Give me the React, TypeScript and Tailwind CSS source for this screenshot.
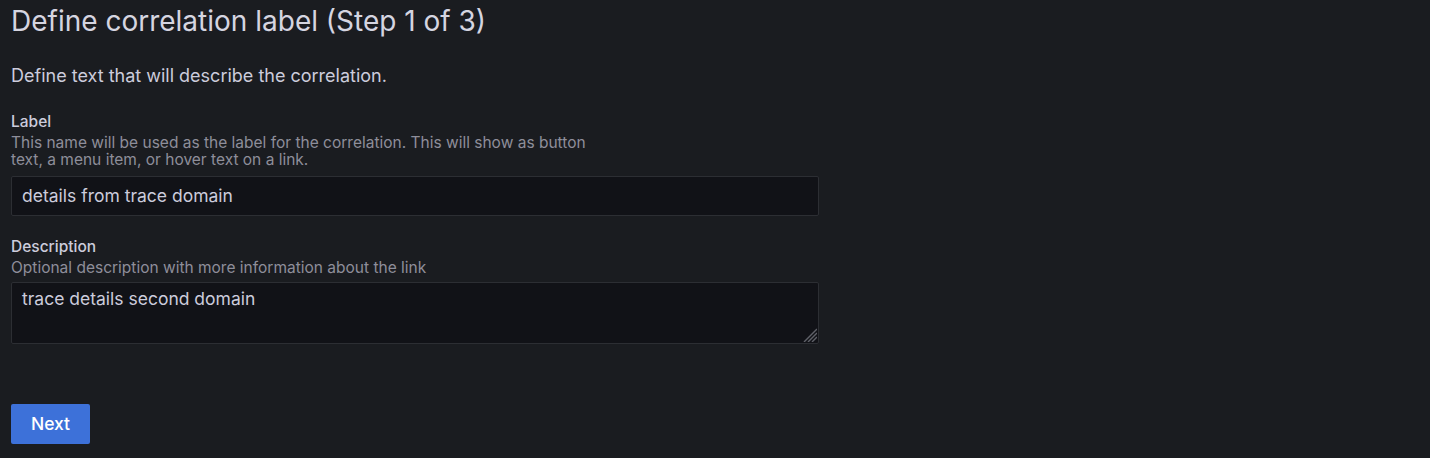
import React from "react";

export default function App() {
  return (
    <div
      className="w-[1430px] h-[458px] bg-[#1a1c20] text-[#ccccdc] px-[11px] pt-[5px] overflow-hidden"
      style={{ fontFamily: "Inter, 'Noto Sans', sans-serif" }}
    >
      <h2 className="text-[28px] leading-[32px] font-normal text-[#d5d5e0]">
        Define correlation label (Step 1 of 3)
      </h2>
      <p className="text-[18px] leading-[22px] mt-[28px]">Define text that will describe the correlation.</p>

      <div className="mt-[24px] w-[808px]">
        <div className="text-[15.5px] leading-[22px] font-medium text-[#ccccdc]">Label</div>
        <div className="mt-[1px] text-[15.5px] leading-[17px] text-[#8e8e9a] max-w-[600px]">
          This name will be used as the label for the correlation. This will show as button text, a menu item, or hover text on a link.
        </div>
        <div className="mt-[8px] h-[40px] bg-[#111217] border border-[#2c2e33] rounded-[2px] flex items-center px-[10px] text-[17.5px]">
          details from trace domain
        </div>
      </div>

      <div className="mt-[20px] w-[808px]">
        <div className="text-[15.5px] leading-[22px] font-medium">Description</div>
        <div className="mt-[1px] text-[15.5px] leading-[17px] text-[#8e8e9a]">Optional description with more information about the link</div>
        <div className="relative mt-[6px] h-[62px] bg-[#111217] border border-[#2c2e33] rounded-[2px] px-[10px] pt-[5px] text-[17.5px] leading-[22px]">
          trace details second domain
          <svg className="absolute right-[1px] bottom-[1px]" width="16" height="16" viewBox="0 0 16 16">
            <g stroke="#5f6068" strokeWidth="1.4">
              <line x1="16" y1="3" x2="3" y2="16" />
              <line x1="16" y1="7" x2="7" y2="16" />
              <line x1="16" y1="11" x2="11" y2="16" />
            </g>
          </svg>
        </div>
      </div>

      <button className="mt-[60px] h-[40px] w-[79px] bg-[#3d71d9] rounded-[2px] text-white text-[17.5px] font-medium">
        Next
      </button>
    </div>
  );
}
